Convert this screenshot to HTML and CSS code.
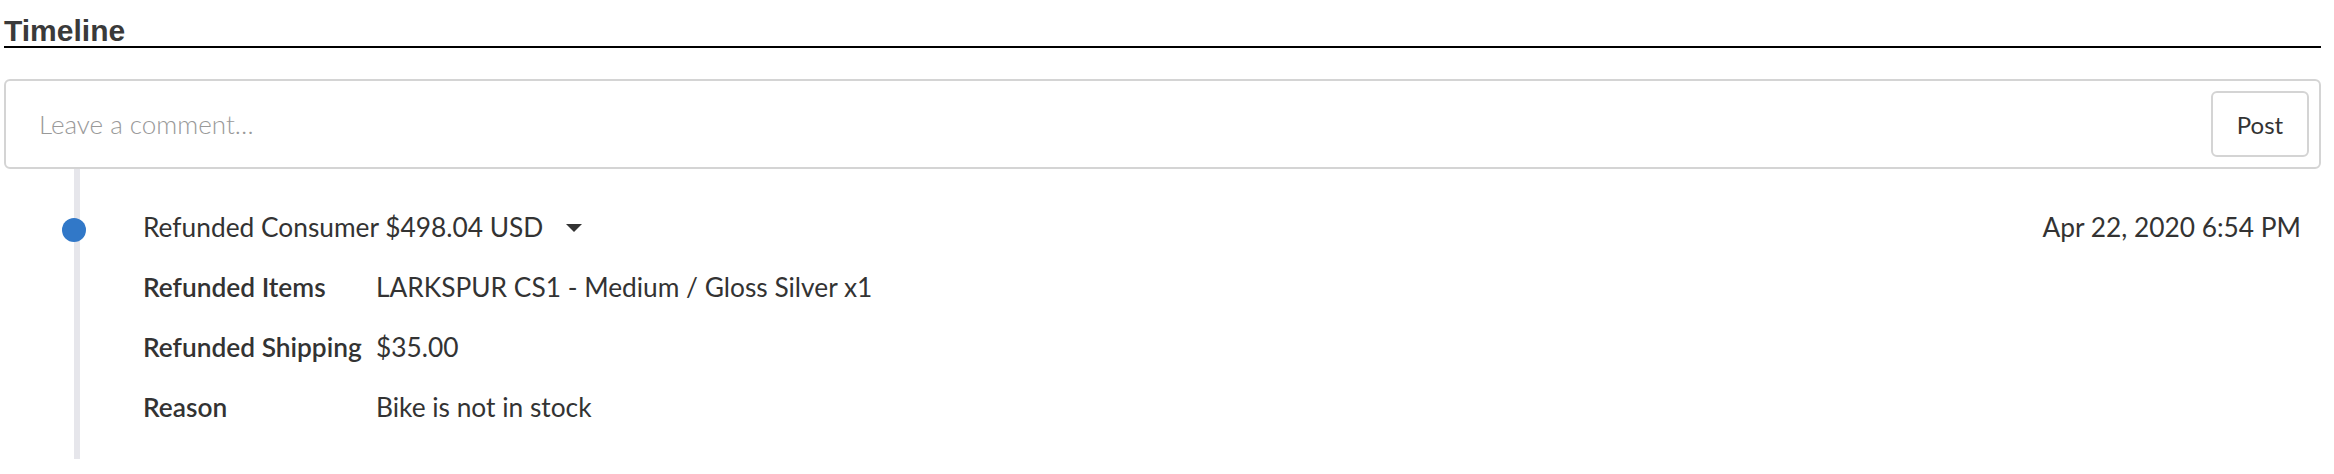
FILE: index.html
```html
<!DOCTYPE html>
<html lang="en">

<head>
    <meta charset="UTF-8">
    <meta name="viewport" content="width=device-width, initial-scale=1.0">
    <title>Timeline</title>
    <link rel="stylesheet" href="styles.css">
</head>

<body>
    <div class="page">
        <h2 class="title">Timeline</h2>

        <form class="comment-box" onsubmit="return false">
            <input class="comment-input" type="text" placeholder="Leave a comment…">
            <button class="post-btn" type="submit">Post</button>
        </form>

        <div class="timeline">
            <div class="event">
                <span class="dot"></span>
                <div class="event-head">
                    <div class="event-title">
                        Refunded Consumer $498.04 USD
                        <svg class="caret" width="16" height="8" viewBox="0 0 16 8">
                            <path d="M0 0 H16 L8 8 Z" fill="#333" />
                        </svg>
                    </div>
                    <div class="event-time">Apr 22, 2020 6:54 PM</div>
                </div>
                <div class="details">
                    <div class="label">Refunded Items</div>
                    <div class="value">LARKSPUR CS1 - Medium / Gloss Silver x1</div>
                    <div class="label">Refunded Shipping</div>
                    <div class="value">$35.00</div>
                    <div class="label">Reason</div>
                    <div class="value">Bike is not in stock</div>
                </div>
            </div>
        </div>
    </div>
</body>

</html>
```

FILE: styles.css
```css
* {
    box-sizing: border-box;
}

body {
    margin: 0;
    background: #fff;
    color: #333;
    font-family: Lato, 'Open Sans', sans-serif;
}

.page {
    margin: 0 13px 0 4px;
}

.title {
    margin: 0;
    padding-top: 15px;
    font-family: 'Liberation Sans', Arial, sans-serif;
    font-size: 30px;
    font-weight: bold;
    line-height: 31px;
    color: #3a3a3a;
    border-bottom: 2px solid #000;
}

.comment-box {
    display: flex;
    align-items: center;
    margin: 31px 0 0;
    padding: 10px;
    border: 2px solid #d4d4d4;
    border-radius: 6px;
}

.comment-input {
    flex: 1;
    height: 66px;
    padding: 0 0 0 23px;
    border: none;
    outline: none;
    font-family: Lato, sans-serif;
    font-size: 26px;
    font-weight: 300;
    color: #333;
}

.comment-input::placeholder {
    color: #999;
}

.post-btn {
    width: 98px;
    height: 66px;
    background: #fff;
    border: 2px solid #d4d4d4;
    border-radius: 6px;
    font-family: Lato, sans-serif;
    font-size: 24px;
    color: #333;
    cursor: pointer;
}

.timeline {
    margin-left: 70px;
    border-left: 6px solid #e6e6eb;
}

.event {
    position: relative;
    padding: 38px 20px 32px 63px;
    font-size: 26.3px;
    line-height: 40px;
}

.dot {
    position: absolute;
    left: -18px;
    top: 49px;
    width: 24px;
    height: 24px;
    border-radius: 50%;
    background: #3178c8;
}

.event-head {
    display: flex;
    justify-content: space-between;
}

.caret {
    margin-left: 16px;
    vertical-align: 5px;
}

.details {
    display: grid;
    grid-template-columns: 233px 1fr;
    row-gap: 20px;
    margin-top: 20px;
}

.label {
    font-weight: 600;
}
```
